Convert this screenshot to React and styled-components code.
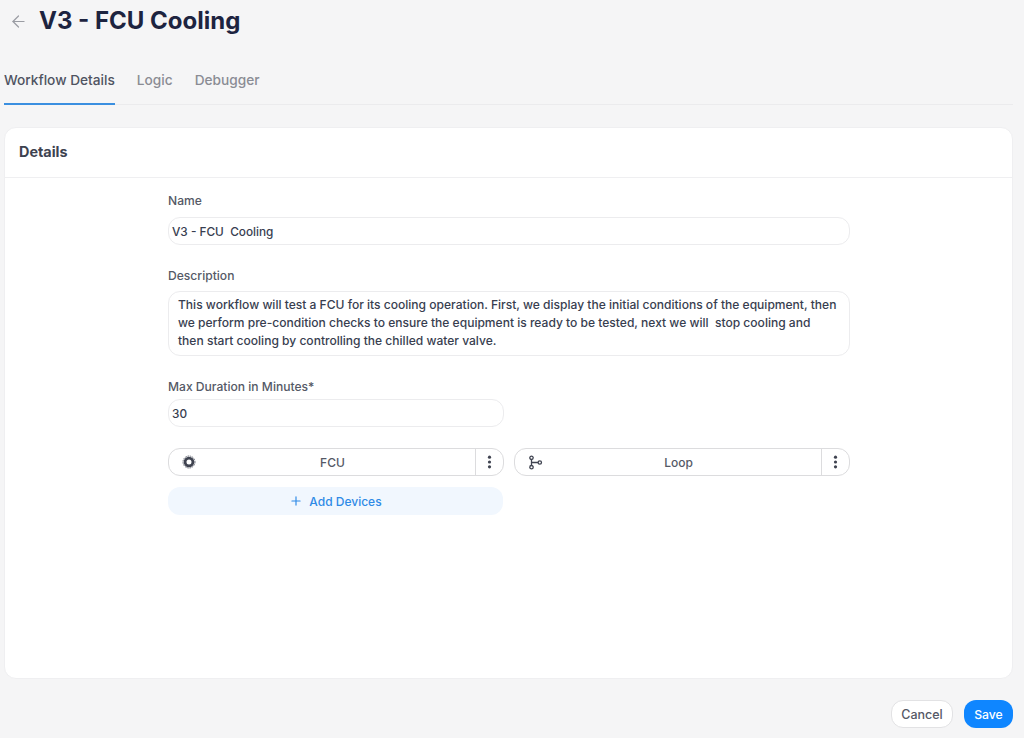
import React from 'react';
import styled, { createGlobalStyle } from 'styled-components';
import { ArrowLeft, Plus } from 'lucide-react';

const GlobalStyle = createGlobalStyle`
  * { box-sizing: border-box; }
  html, body { margin: 0; height: 100%; }
  body {
    background: #f5f5f6;
    font-family: Inter, "Noto Sans", sans-serif;
    color: #30364a;
    overflow: hidden;
  }
`;

const CpuIcon = () => (
  <svg width="14" height="14" viewBox="0 0 14 14" fill="none" stroke="#3f4350">
    <circle cx="7" cy="7" r="3.9" strokeWidth="2.8" />
    <circle cx="7" cy="7" r="6" strokeWidth="1" strokeDasharray="1.6 0.76" opacity="0.75" />
  </svg>
);

const LoopIcon = () => (
  <svg width="15" height="15" viewBox="0 0 15 15" fill="none" stroke="#3f4350" strokeWidth="1.3">
    <circle cx="3.5" cy="2.8" r="1.7" />
    <circle cx="3.5" cy="12.2" r="1.7" />
    <circle cx="11.8" cy="7.5" r="1.7" />
    <path d="M3.5 4.5v6M3.5 7.5h6.6" />
  </svg>
);

const DotsIcon = () => (
  <svg width="6" height="14" viewBox="0 0 6 14" fill="#3f4350">
    <circle cx="2.5" cy="2.2" r="1.6" />
    <circle cx="2.5" cy="7" r="1.6" />
    <circle cx="2.5" cy="11.8" r="1.6" />
  </svg>
);

const Device = ({ icon, name }) => (
  <DeviceChip>
    <DeviceIcon>{icon}</DeviceIcon>
    <DeviceName>{name}</DeviceName>
    <DeviceMenu>
      <DotsIcon />
    </DeviceMenu>
  </DeviceChip>
);

const App = () => (
  <Page>
    <GlobalStyle />
    <Header>
      <ArrowLeft size={19} strokeWidth={1.5} color="#9a9ca3" />
      <Title>V3 - FCU Cooling</Title>
    </Header>
    <Tabs>
      <Tab $active>Workflow Details</Tab>
      <Tab>Logic</Tab>
      <Tab>Debugger</Tab>
    </Tabs>
    <Card>
      <CardHeader>Details</CardHeader>
      <Form>
        <Field $gap={8} $after={23}>
          <Label>Name</Label>
          <TextBox>V3 - FCU&nbsp; Cooling</TextBox>
        </Field>
        <Field $gap={7} $after={23}>
          <Label>Description</Label>
          <TextArea>
            This workflow will test a FCU for its cooling operation. First, we display the initial conditions of the equipment, then
            <br />
            we perform pre-condition checks to ensure the equipment is ready to be tested, next we will&nbsp; stop cooling and
            <br />
            then start cooling by controlling the chilled water valve.
          </TextArea>
        </Field>
        <Field $gap={4} $after={21}>
          <Label>Max Duration in Minutes*</Label>
          <HalfBox>30</HalfBox>
        </Field>
        <DeviceGrid>
          <Device icon={<CpuIcon />} name="FCU" />
          <Device icon={<LoopIcon />} name="Loop" />
          <AddButton>
            <Plus size={14} strokeWidth={2} />
            Add Devices
          </AddButton>
        </DeviceGrid>
      </Form>
    </Card>
    <Footer>
      <CancelButton>Cancel</CancelButton>
      <SaveButton>Save</SaveButton>
    </Footer>
  </Page>
);

const Page = styled.div`
  width: 1024px;
  height: 738px;
  padding: 0 11px 10px 4px;
  display: flex;
  flex-direction: column;
`;

const Header = styled.div`
  height: 42px;
  padding-left: 5px;
  display: flex;
  align-items: center;
  gap: 11px;
`;

const Title = styled.h1`
  margin: 0;
  font-size: 24px;
  line-height: 42px;
  font-weight: 700;
  color: #1d2440;
`;

const Tabs = styled.div`
  margin-top: 20px;
  height: 43px;
  display: flex;
  gap: 22px;
  border-bottom: 1px solid #ebebed;
`;

const Tab = styled.div`
  height: 43px;
  padding-top: 9px;
  font-size: 13.7px;
  line-height: 18px;
  font-weight: 500;
  color: ${(p) => (p.$active ? '#4f5361' : '#8a8c94')};
  border-bottom: 2px solid ${(p) => (p.$active ? '#3a8fe0' : 'transparent')};
`;

const Card = styled.div`
  margin-top: 22px;
  height: 552px;
  background: #fff;
  border: 1px solid #efeff1;
  border-radius: 12px;
`;

const CardHeader = styled.div`
  height: 50px;
  padding: 0 14px 2px;
  display: flex;
  align-items: center;
  font-size: 14.4px;
  font-weight: 700;
  color: #3d4250;
  border-bottom: 1px solid #efeff1;
`;

const Form = styled.div`
  width: 682px;
  margin: 15px 0 0 163px;
  display: flex;
  flex-direction: column;
`;

const Field = styled.div`
  display: flex;
  flex-direction: column;
  gap: ${(p) => p.$gap}px;
  margin-bottom: ${(p) => p.$after}px;
`;

const Label = styled.div`
  font-size: 12.1px;
  line-height: 16px;
  font-weight: 500;
  color: #555966;
`;

const TextBox = styled.div`
  height: 28px;
  padding: 1px 3px 0;
  display: flex;
  align-items: center;
  font-size: 11.8px;
  font-weight: 500;
  color: #383e50;
  border: 1px solid #ececee;
  border-radius: 12px;
`;

const HalfBox = styled(TextBox)`
  width: 336px;
`;

const TextArea = styled.div`
  height: 65px;
  padding: 4px 9px;
  font-size: 12.05px;
  line-height: 18px;
  font-weight: 500;
  color: #383e50;
  white-space: nowrap;
  border: 1px solid #ececee;
  border-radius: 12px;
`;

const DeviceGrid = styled.div`
  display: grid;
  grid-template-columns: 336px 336px;
  column-gap: 10px;
  row-gap: 11px;
`;

const DeviceChip = styled.div`
  height: 28px;
  display: flex;
  align-items: center;
  border: 1px solid #dcdcde;
  border-radius: 12px;
  color: #555966;
`;

const DeviceIcon = styled.div`
  width: 42px;
  flex-shrink: 0;
  padding-left: 13px;
  display: flex;
  align-items: center;
`;

const DeviceName = styled.div`
  flex: 1;
  margin-left: -21px;
  text-align: center;
  font-size: 12px;
  font-weight: 500;
`;

const DeviceMenu = styled.div`
  width: 28px;
  height: 100%;
  display: flex;
  align-items: center;
  justify-content: center;
  border-left: 1px solid #dcdcde;
`;

const AddButton = styled.div`
  height: 28px;
  width: 335px;
  display: flex;
  align-items: center;
  justify-content: center;
  gap: 6px;
  font-size: 12px;
  font-weight: 500;
  color: #2f8ae6;
  background: #f1f7fe;
  border-radius: 12px;
`;

const Footer = styled.div`
  margin-top: 21px;
  display: flex;
  justify-content: flex-end;
  gap: 11px;
`;

const CancelButton = styled.div`
  width: 62px;
  height: 28px;
  display: flex;
  align-items: center;
  justify-content: center;
  font-size: 12.5px;
  font-weight: 500;
  color: #555966;
  background: #fff;
  border: 1px solid #e2e2e4;
  border-radius: 12px;
`;

const SaveButton = styled(CancelButton)`
  width: 49px;
  font-size: 12.2px;
  color: #fff;
  background: #0f86ff;
  border: none;
`;

export default App;
